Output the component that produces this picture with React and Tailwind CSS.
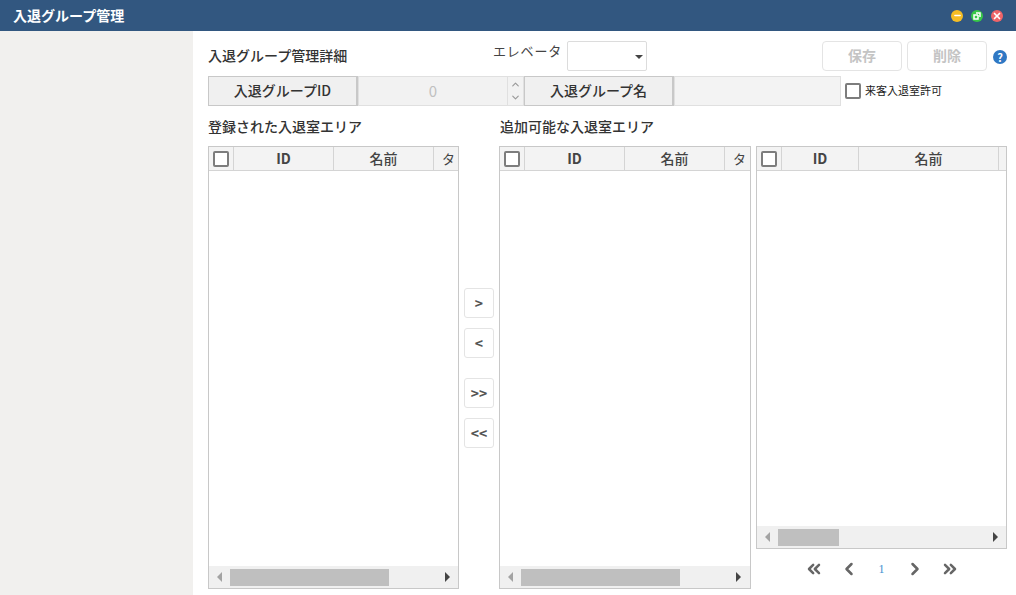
import React from "react";
import { ChevronUp, ChevronDown, ChevronLeft, ChevronRight, ChevronsLeft, ChevronsRight, Minus, X } from "lucide-react";

const font = "font-['Noto_Sans_CJK_JP','Noto_Sans',sans-serif]";

function CheckBox() {
  return <div className="w-4 h-4 border-2 border-[#7d7d7d] rounded-[2px] bg-white shrink-0" />;
}

//flechas del scroll horizontal
function ScrollBar({ thumbLeft, thumbWidth, thumbGap }) {
  return (
    <div className="h-[22px] mt-auto bg-[#f0f0f0] flex items-center shrink-0">
      <div className="w-0 h-0 ml-[8px] border-y-[5px] border-y-transparent border-r-[5px] border-r-[#a3a3a3]" />
      <div className="h-[17px] bg-[#bfbfbf]" style={{ marginLeft: thumbLeft, width: thumbWidth }} />
      <div className="w-0 h-0 border-y-[5px] border-y-transparent border-l-[5px] border-l-[#444]" style={{ marginLeft: thumbGap }} />
    </div>
  );
}

function GridTable({ className, idW, nameW, third, thumbLeft, thumbWidth, thumbGap }) {
  return (
    <div className={`border border-[#c8c8c8] flex flex-col bg-white overflow-hidden ${className}`}>
      <div className="h-[24px] flex bg-[#f3f3f3] border-b border-[#d4d4d4] shrink-0 text-[14px] font-bold text-[#444]">
        <div className="w-[25px] flex items-center justify-center border-r border-[#d4d4d4] shrink-0"><CheckBox /></div>
        <div className="flex items-center justify-center border-r border-[#d4d4d4] shrink-0" style={{ width: idW }}>ID</div>
        <div className="flex items-center justify-center border-r border-[#d4d4d4] shrink-0 font-medium" style={{ width: nameW }}>名前</div>
        <div className="flex-1 flex items-center pl-[8px] font-normal text-[13px] overflow-hidden whitespace-nowrap">{third}</div>
      </div>
      <ScrollBar thumbLeft={thumbLeft} thumbWidth={thumbWidth} thumbGap={thumbGap} />
    </div>
  );
}

function MoveButton({ label, className = "" }) {
  return (
    <button className={`w-[30px] h-[30px] border border-[#e4e4e4] rounded-[3px] bg-white text-[14px] font-bold text-[#555] flex items-center justify-center ${className}`}>
      {label}
    </button>
  );
}

function LabelCell({ children, className }) {
  return (
    <div className={`h-[30px] bg-[#f0f0f0] border border-[#c8c8c8] border-r-2 pb-[2px] text-[14px] font-medium text-[#333] flex items-center justify-center ${className}`}>
      {children}
    </div>
  );
}

export default function App() {
  return (
    <div className={`w-[1016px] h-[595px] overflow-hidden flex flex-col bg-white ${font}`}>
      <div className="h-[31px] bg-[#325780] flex items-center justify-between pl-[13px] pr-[13px] shrink-0">
        <span className="text-[14px] font-bold text-white">入退グループ管理</span>
        <div className="flex items-center gap-[8px]">
          <div className="w-3 h-3 rounded-full bg-[#f5bd25] flex items-center justify-center"><Minus size={9} strokeWidth={4} color="#fff" /></div>
          <div className="w-3 h-3 rounded-full bg-[#37c748] flex items-center justify-center">
            <svg width="8" height="8" viewBox="0 0 8 8" fill="none" stroke="#fff" strokeWidth="1.5">
              <path d="M3 1h4v4M5 3v4H1V3h4" />
            </svg>
          </div>
          <div className="w-3 h-3 rounded-full bg-[#ee6468] flex items-center justify-center"><X size={10} strokeWidth={4} color="#fff" /></div>
        </div>
      </div>

      <div className="flex-1 flex min-h-0">
        <div className="w-[193px] bg-[#f1f0ee] shrink-0" />
        <div className="flex-1 pl-[15px] pr-[9px] pt-[10px] flex flex-col min-w-0">
          <div className="h-[30px] flex shrink-0">
            <div className="w-[285px] text-[14px] font-medium text-[#333] pt-[4px] leading-[20px]">入退グループ管理詳細</div>
            <div className="w-[74px] text-[13px] text-[#444] tracking-[0.8px] leading-[20px] whitespace-nowrap">エレベータ</div>
            <div className="w-[80px] h-[30px] border border-[#dcdcdc] rounded-[2px] relative">
              <div className="absolute right-[3px] top-[13px] w-0 h-0 border-x-[4px] border-x-transparent border-t-[4px] border-t-[#444]" />
            </div>
            <button className="ml-[175px] w-[80px] h-[30px] border border-[#e4e4e4] rounded-[4px] pb-[1px] text-[14px] font-bold text-[#c4c4c4]">保存</button>
            <button className="ml-[5px] w-[80px] h-[30px] border border-[#e4e4e4] rounded-[4px] pb-[1px] text-[14px] font-bold text-[#c4c4c4]">削除</button>
            <div className="ml-[6px] mt-[9px] w-[14px] h-[14px] rounded-full bg-[#2f78c4] text-white text-[11px] font-bold flex items-center justify-center leading-none">?</div>
          </div>

          <div className="h-[30px] flex mt-[5px] shrink-0">
            <LabelCell className="w-[150px]">入退グループID</LabelCell>
            <div className="w-[166px] h-[30px] bg-[#f2f2f2] border border-[#e0e0e0] flex">
              <div className="flex-1 text-center text-[15px] text-[#c0c0c0] leading-[28px]">0</div>
              <div className="w-[16px] border-l border-[#e0e0e0] flex flex-col items-center justify-center gap-[2px] text-[#999]">
                <ChevronUp size={11} strokeWidth={2.5} />
                <ChevronDown size={11} strokeWidth={2.5} />
              </div>
            </div>
            <LabelCell className="w-[150px]">入退グループ名</LabelCell>
            <div className="w-[167px] h-[30px] bg-[#f3f3f3] border border-[#e0e0e0]" />
            <div className="ml-[4px] flex items-center gap-[4px]">
              <CheckBox />
              <span className="text-[11px] text-[#222] pb-[1px] whitespace-nowrap">来客入退室許可</span>
            </div>
          </div>

          <div className="flex mt-[11px] h-[18px] mb-[1px] shrink-0 text-[14px] font-medium text-[#333] leading-[18px]">
            <div className="w-[292px]">登録された入退室エリア</div>
            <div>追加可能な入退室エリア</div>
          </div>

          <div className="flex mt-[10px] h-[443px] shrink-0">
            <GridTable className="w-[251px] h-[443px]" idW={100} nameW={100} third="タ" thumbLeft={8} thumbWidth={159} thumbGap={56} />
            <div className="w-[40px] flex flex-col items-center pt-[142px]">
              <MoveButton label=">" />
              <MoveButton label="<" className="mt-[10px]" />
              <MoveButton label=">>" className="mt-[20px]" />
              <MoveButton label="<<" className="mt-[10px]" />
            </div>
            <GridTable className="w-[252px] h-[443px]" idW={100} nameW={100} third="タ" thumbLeft={8} thumbWidth={159} thumbGap={56} />
            <div className="ml-[5px] w-[251px] flex flex-col">
              <GridTable className="w-[251px] h-[403px]" idW={77} nameW={140} third="" thumbLeft={8} thumbWidth={61} thumbGap={154} />
              <div className="flex items-center justify-center h-[38px] text-[#666] mt-[1px] gap-[15px]">
                <ChevronsLeft size={20} strokeWidth={3} />
                <ChevronLeft size={20} strokeWidth={3} />
                <span className="w-[16px] text-center text-[12px] text-[#3f8fd0] font-['Liberation_Serif',serif]">1</span>
                <ChevronRight size={20} strokeWidth={3} />
                <ChevronsRight size={20} strokeWidth={3} />
              </div>
            </div>
          </div>
        </div>
      </div>
    </div>
  );
}
